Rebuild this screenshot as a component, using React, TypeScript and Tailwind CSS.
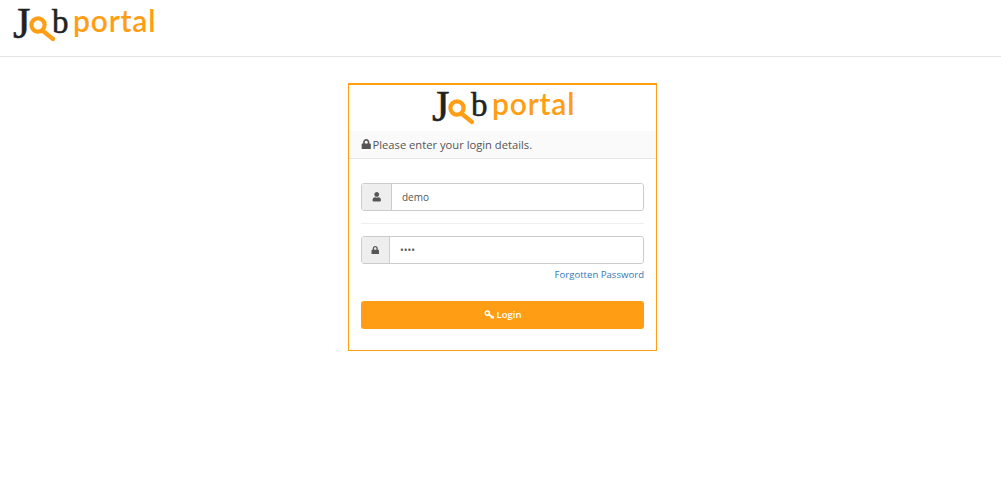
import { FaLock, FaUser } from "react-icons/fa";

const KeyIcon = () => (
  <svg viewBox="0 0 12 11" className="h-[10px] w-[11px]" fill="none" stroke="currentColor">
    <circle cx="3.6" cy="3.4" r="2.3" strokeWidth="1.7" />
    <path d="M5.4 5.2 L10.6 8.4" strokeWidth="2" />
    <path d="M8.4 7.2 L7.6 9.4 M10.4 8.2 L9.8 9.8" strokeWidth="1.3" />
  </svg>
);

const Logo = () => (
  <div className="flex h-[36px] w-[143px] items-start select-none">
    <span className="mt-[-3px] w-[15px] font-['Liberation_Serif',serif] text-[45px] leading-[40px] text-[#222] [-webkit-text-stroke:0.5px_#222]">J</span>
    <svg viewBox="0 0 28 26" className="mt-[10px] h-[26px] w-[28px] shrink-0" fill="none">
      <circle cx="10" cy="9" r="6.6" stroke="#ff9e14" strokeWidth="4.2" />
      <path d="M15 15 L25 23" stroke="#ff9e14" strokeWidth="4.2" strokeLinecap="round" />
    </svg>
    <span className="mt-[-4px] ml-[-4px] w-[15px] font-['Liberation_Serif',serif] text-[33px] leading-[40px] text-[#222] [-webkit-text-stroke:0.5px_#222]">b</span>
    <span className="mt-[-6px] ml-[6px] font-['Lato',sans-serif] text-[30px] font-semibold leading-[40px] tracking-[0.8px] text-[#ff9e14]">portal</span>
  </div>
);

export default function App() {
  return (
    <div className="min-h-[494px] bg-white font-['Open_Sans',sans-serif] text-[#555]">
      {/* Header */}
      <header className="h-[57px] border-b border-[#e5e5e5] pt-[6px] pl-[13px]">
        <Logo />
      </header>

      {/* Login card */}
      <main className="flex justify-center pt-[26px] pl-[4px]">
        <div className="h-[268px] w-[309px] border border-t-2 border-[#ff9e14] bg-white">
          <div className="flex h-[46px] justify-center pt-[4px] pl-[2px]">
            <Logo />
          </div>

          <div className="flex h-[28px] items-center gap-[1px] border-b border-[#e5e5e5] bg-[#fafafa] pt-[1px] pl-[12px] text-[11.2px] text-[#555]">
            <FaLock className="mt-[-2px] text-[10.5px]" />
            <span>Please enter your login details.</span>
          </div>

          <div className="px-[12px] pt-[24px]">
            <div className="flex h-[28px] w-[283px] rounded-[3px] border border-[#ccc]">
              <div className="flex w-[30px] items-center justify-center border-r border-[#ccc] bg-[#eee] text-[#555]">
                <FaUser className="text-[9.5px]" />
              </div>
              <input
                readOnly
                value="demo"
                className="min-w-0 flex-1 rounded-r-[3px] bg-white pl-[10px] text-[10px] text-[#555] outline-none"
              />
            </div>

            <hr className="mt-[12px] mb-[12px] border-[#eee]" />

            <div className="flex h-[28px] w-[283px] rounded-[3px] border border-[#ccc]">
              <div className="flex w-[28px] items-center justify-center border-r border-[#ccc] bg-[#eee] text-[#555]">
                <FaLock className="text-[8.5px]" />
              </div>
              <input
                readOnly
                type="password"
                value="demo"
                className="min-w-0 flex-1 rounded-r-[3px] bg-white pl-[10px] text-[10px] text-[#555] outline-none"
              />
            </div>

            <div className="mt-[4px] h-[14px] w-[283px] text-right">
              <a href="#" className="block text-[9.6px] leading-[14px] text-[#337ab7]">Forgotten Password</a>
            </div>

            <button className="mt-[19px] flex h-[28px] w-[283px] items-center justify-center gap-[2px] rounded-[3px] bg-[#ff9e14] text-[9.5px] font-semibold text-white">
              <KeyIcon /> Login
            </button>
          </div>
        </div>
      </main>
    </div>
  );
}
